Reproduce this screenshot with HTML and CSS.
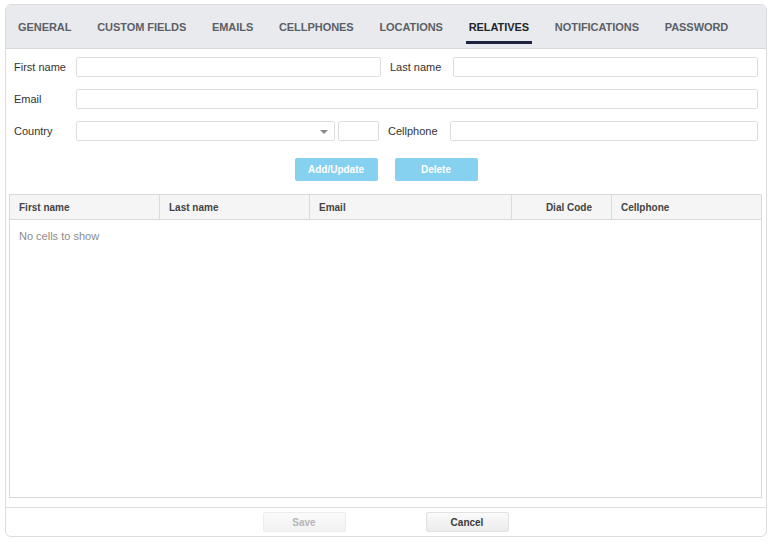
FILE: index.html
```html
<!DOCTYPE html>
<html>
<head>
<meta charset="utf-8">
<link rel="stylesheet" href="styles.css">
</head>
<body>
<div class="panel">
  <div class="tabs">
    <div class="tab">GENERAL</div>
    <div class="tab">CUSTOM FIELDS</div>
    <div class="tab">EMAILS</div>
    <div class="tab">CELLPHONES</div>
    <div class="tab">LOCATIONS</div>
    <div class="tab active">RELATIVES</div>
    <div class="tab">NOTIFICATIONS</div>
    <div class="tab">PASSWORD</div>
  </div>
  <div class="content">
    <div class="form">
      <div class="row two">
        <label class="lbl">First name</label>
        <div class="input"></div>
        <label class="lbl lbl2">Last name</label>
        <div class="input"></div>
      </div>
      <div class="row one">
        <label class="lbl">Email</label>
        <div class="input"></div>
      </div>
      <div class="row three">
        <label class="lbl">Country</label>
        <div class="input select"><span class="arrow"></span></div>
        <div class="input dial"></div>
        <label class="lbl lbl2">Cellphone</label>
        <div class="input grow"></div>
      </div>
    </div>
    <div class="actions">
      <button class="btn-blue">Add/Update</button>
      <button class="btn-blue">Delete</button>
    </div>
    <div class="grid">
      <div class="grid-head">
        <div class="col c1">First name</div>
        <div class="col c2">Last name</div>
        <div class="col c3">Email</div>
        <div class="col c4">Dial Code</div>
        <div class="col c5">Cellphone</div>
      </div>
      <div class="grid-body">
        <div class="empty">No cells to show</div>
      </div>
    </div>
  </div>
  <div class="footer">
    <button class="btn-gray disabled">Save</button>
    <button class="btn-gray">Cancel</button>
  </div>
</div>
</body>
</html>
```
FILE: styles.css
```css
* { box-sizing: border-box; }
html, body { margin: 0; padding: 0; background: #ffffff; }
body {
  font-family: "Liberation Sans", Arial, sans-serif;
  padding: 4px 4px 5px 5px;
  width: 770px;
  height: 542px;
}
.panel {
  width: 762px;
  height: 533px;
  border: 1px solid #dcdcdc;
  border-radius: 6px;
  display: flex;
  flex-direction: column;
  overflow: hidden;
  background: #fff;
}
.tabs {
  height: 44px;
  flex: 0 0 44px;
  background: #e9eaed;
  border-bottom: 1px solid #d6d7da;
  display: flex;
  align-items: stretch;
  padding-left: 9px;
  gap: 19.75px;
}
.tab {
  font-size: 11px;
  font-weight: bold;
  color: #5b5f67;
  padding: 0 3px;
  display: flex;
  align-items: center;
  position: relative;
  letter-spacing: -0.05px;
}
.tab.active { color: #23252b; }
.tab.active::after {
  content: "";
  position: absolute;
  left: 0;
  right: 0;
  bottom: 4px;
  height: 3px;
  background: #1d2340;
}
.content {
  flex: 1;
  display: flex;
  flex-direction: column;
  padding: 8px 4px 0 3px;
}
.form {
  display: flex;
  flex-direction: column;
  gap: 12px;
  padding: 0 4px 0 5px;
}
.row { display: flex; align-items: center; height: 20px; }
.lbl {
  font-size: 11px;
  color: #333;
  flex: 0 0 62px;
  white-space: nowrap;
}
.lbl2 { flex: 0 0 72px; padding-left: 9px; }
.row.three .lbl2 { flex: 0 0 71px; }
.input {
  height: 20px;
  border: 1px solid #dedede;
  border-radius: 2px;
  background: #fff;
  flex: 1;
}
.select { flex: 0 0 259px; position: relative; }
.arrow {
  position: absolute;
  right: 6px;
  top: 8px;
  width: 0;
  height: 0;
  border-left: 4px solid transparent;
  border-right: 4px solid transparent;
  border-top: 4px solid #8a8a8a;
}
.dial { flex: 0 0 41px; margin-left: 3px; }
.grow { flex: 1; }
.actions {
  display: flex;
  justify-content: center;
  gap: 17px;
  margin-top: 17px;
  margin-left: 1px;
}
.btn-blue {
  width: 83px;
  height: 23px;
  border: none;
  border-radius: 2px;
  background: #86d1f0;
  color: #fff;
  font-family: "Liberation Sans", Arial, sans-serif;
  font-size: 10px;
  font-weight: bold;
  padding: 0;
}
.grid {
  margin-top: 13px;
  border: 1px solid #d9d9d9;
  height: 304px;
  display: flex;
  flex-direction: column;
}
.grid-head {
  display: flex;
  height: 25px;
  background: #f5f5f5;
  border-bottom: 1px solid #d9d9d9;
}
.col {
  font-size: 10px;
  font-weight: bold;
  color: #444;
  display: flex;
  align-items: center;
  padding-left: 9px;
  border-right: 1px solid #dadada;
}
.c1 { flex: 0 0 150px; }
.c2 { flex: 0 0 150px; }
.c3 { flex: 0 0 202px; }
.c4 { flex: 0 0 100px; justify-content: flex-end; padding-right: 19px; }
.c5 { flex: 1; border-right: none; }
.grid-body { flex: 1; padding: 10px 9px; }
.empty { font-size: 11px; color: #8c8c8c; }
.footer {
  margin-top: 9px;
  border-top: 1px solid #dedede;
  flex: 1;
  display: flex;
  justify-content: center;
  align-items: center;
  gap: 80px;
  padding-right: 1px;
}
.btn-gray {
  width: 83px;
  height: 20px;
  border: 1px solid #e2e2e2;
  border-radius: 2px;
  background: linear-gradient(#fafafa, #ececec);
  color: #3a3a3a;
  font-family: "Liberation Sans", Arial, sans-serif;
  font-size: 10px;
  font-weight: bold;
  padding: 0;
}
.btn-gray.disabled {
  color: #b5b5b5;
  background: linear-gradient(#fbfbfb, #f1f1f1);
  border-color: #ececec;
}
```
